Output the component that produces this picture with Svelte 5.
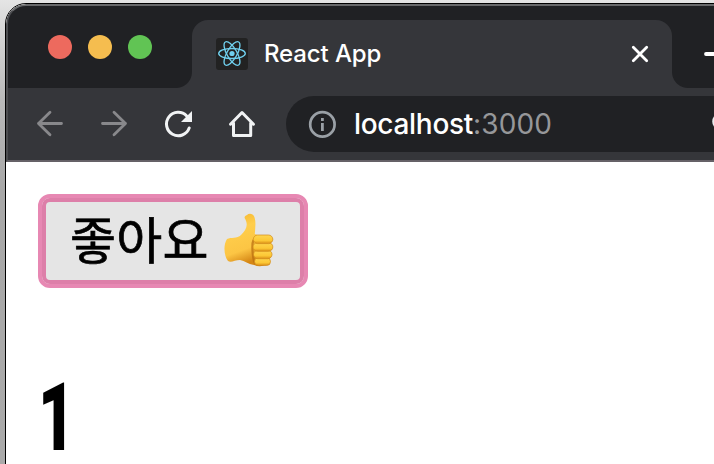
<script>
  let count = $state(1);
</script>

<div class="desktop">
  <div class="window">
    <div class="tabs">
      <div class="lights"><i class="red"></i><i class="yellow"></i><i class="green"></i></div>
      <div class="tab">
        <svg class="favicon" width="32" height="32" viewBox="0 0 32 32">
          <rect width="32" height="32" rx="3" fill="#222222" />
          <g fill="none" stroke="#70d0ee" stroke-width="1.35">
            <ellipse cx="16" cy="15.5" rx="13.3" ry="5" />
            <ellipse cx="16" cy="15.5" rx="13.3" ry="5" transform="rotate(60 16 15.5)" />
            <ellipse cx="16" cy="15.5" rx="13.3" ry="5" transform="rotate(120 16 15.5)" />
          </g>
          <circle cx="16" cy="15.5" r="2.6" fill="#70d0ee" />
        </svg>
        <span class="title">React App</span>
        <svg class="close" width="18" height="18" viewBox="0 0 18 18">
          <path d="M2.3 2.3 15.7 15.7M15.7 2.3 2.3 15.7" stroke="#fff" stroke-width="2.8" stroke-linecap="round" />
        </svg>
      </div>
      <svg class="plus" width="28" height="28" viewBox="0 0 28 28">
        <path d="M3 14H25M14 3V25" stroke="#fff" stroke-width="3.8" stroke-linecap="round" />
      </svg>
    </div>
    <div class="toolbar">
      <svg class="icon" width="32" height="32" viewBox="0 0 32 32" fill="none" stroke="#88888b" stroke-width="2.8" stroke-linecap="round" stroke-linejoin="round">
        <path d="M27.5 15.5H4.5M16 4.2 4.5 15.5 16 26.8" />
      </svg>
      <svg class="icon" width="32" height="32" viewBox="0 0 32 32" fill="none" stroke="#88888b" stroke-width="2.8" stroke-linecap="round" stroke-linejoin="round">
        <path d="M4.5 15.5H27.5M16 4.2 27.5 15.5 16 26.8" />
      </svg>
      <svg class="icon" width="32" height="32" viewBox="0 0 32 32">
        <path d="M27.2 20A11.7 11.7 0 1 1 24.7 8" fill="none" stroke="#f1f3f4" stroke-width="3" stroke-linecap="round" />
        <path d="M30 3V14H19Z" fill="#f1f3f4" />
      </svg>
      <svg class="icon" width="32" height="32" viewBox="0 0 32 32" fill="none" stroke="#f1f3f4" stroke-width="3" stroke-linejoin="round" stroke-linecap="round">
        <path d="M4.5 16.2 16 4.5 27.5 16.2M7.5 15V27.5H24.7V15" />
      </svg>
      <div class="address">
        <svg class="info" width="28" height="28" viewBox="0 0 28 28">
          <circle cx="14.4" cy="14.4" r="12.2" fill="none" stroke="#9aa0a6" stroke-width="2.7" />
          <path d="M13 8h2.8v3H13zM13 13h2.8v8H13z" fill="#9aa0a6" />
        </svg>
        <span class="url">localhost<span class="port">:3000</span></span>
        <svg class="search" width="24" height="24" viewBox="0 0 24 24"><circle cx="9" cy="9.5" r="7.5" fill="none" stroke="#e8eaed" stroke-width="2.6" /></svg>
      </div>
    </div>
    <main>
      <button onclick={() => count++}>
        <span class="label">좋아요</span>
        <svg class="thumb" width="54" height="56" viewBox="0 0 54 56" role="img" aria-label="👍">
          <defs>
            <linearGradient id="skin" x1="0" y1="0" x2="0.3" y2="1">
              <stop offset="0" stop-color="#f3b22a" /><stop offset=".35" stop-color="#ffce4c" /><stop offset=".75" stop-color="#fcc544" /><stop offset="1" stop-color="#d58614" />
            </linearGradient>
            <linearGradient id="finger" x1="0" y1="0" x2="0" y2="1">
              <stop offset="0" stop-color="#ffd650" /><stop offset=".65" stop-color="#fcc735" /><stop offset="1" stop-color="#da8e16" />
            </linearGradient>
          </defs>
          <path d="M24 2C26 0 30 .5 31.4 4C33.2 9 32.2 15 31.8 21C35 23 40 22 44 24L45 49C41 54 36 54 31 52C25 51 22 48 17 47C12 47 8 50 5 48C1 43 0 32 4 26C8 24 14 26 18 22C23 17 26 12 21.6 5C21.4 3.5 22.6 2.4 24 2Z" fill="url(#skin)" />
          <path d="M30.5 27C28.5 31 29.5 47 32.5 51" fill="none" stroke="#b96f10" stroke-width="2.3" opacity=".75" />
          <g fill="url(#finger)" stroke="#d18a1a" stroke-width=".7">
            <rect x="31.5" y="44.5" width="16" height="8" rx="4" />
            <rect x="30.5" y="37.2" width="18.5" height="8.5" rx="4.2" />
            <rect x="30" y="29.6" width="19.8" height="8.7" rx="4.3" />
            <rect x="30.3" y="22" width="19.5" height="8.6" rx="4.3" />
          </g>
        </svg>
      </button>
      <h1>{count}</h1>
    </main>
  </div>
</div>

<style>
  :global(body) { margin: 0; overflow: hidden; }
  .desktop {
    box-sizing: border-box; width: 714px; height: 464px; overflow: hidden;
    padding: 3px 0 0 5px;
    background: linear-gradient(180deg, #e5e5e5 0, #dedede 12px, #b9b9b9 100px, #a8a8a8 190px, #aaa 464px);
  }
  .window {
    box-sizing: border-box; width: 740px; height: 490px;
    border: 1px solid #000; border-radius: 21px 0 0 0; overflow: hidden;
    background: #fff; font-family: Inter, "Liberation Sans", sans-serif;
  }
  .tabs {
    box-sizing: border-box; height: 84px; display: flex; align-items: flex-start;
    background: #202124; border-top: 2px solid #68696b; border-left: 2px solid #4c4d50;
    border-top-left-radius: 20px;
  }
  .lights { display: flex; gap: 16px; padding: 29px 40px 0; }
  .lights i { width: 24px; height: 24px; border-radius: 50%; }
  .red { background: #ed6a5e; }
  .yellow { background: #f5bd4f; }
  .green { background: #61c454; }
  .tab {
    box-sizing: border-box; width: 480px; height: 68px; margin-top: 14px;
    display: flex; align-items: center; padding: 0 23px 0 24px;
    background: #35363a; border-radius: 16px 16px 0 0; position: relative;
  }
  .tab::before, .tab::after {
    content: ""; position: absolute; bottom: 0; width: 16px; height: 16px;
  }
  .tab::before { left: -16px; background: radial-gradient(circle at 0 0, transparent 15.5px, #35363a 16.5px); }
  .tab::after { right: -16px; background: radial-gradient(circle at 100% 0, transparent 15.5px, #35363a 16.5px); }
  .title { margin-left: 16px; color: #fff; font-size: 24px; font-weight: 500; line-height: 32px; letter-spacing: -.12px; white-space: nowrap; }
  .close { margin-left: auto; }
  .plus { margin: 34px 0 0 31px; flex: none; }
  .toolbar {
    box-sizing: border-box; height: 74px; display: flex; align-items: center;
    padding-left: 26px; background: #35363a;
    border-left: 2px solid #4c4d50; border-bottom: 2px solid #656167;
  }
  .icon { flex: none; margin-right: 32px; }
  .address {
    box-sizing: border-box; flex: none; width: 470px; height: 56px; margin-left: -4px;
    display: flex; align-items: center; padding-left: 22px;
    background: #202124; border-radius: 28px 0 0 28px;
  }
  .url { width: 358px; margin-left: 18px; color: #fff; font-size: 28px; font-weight: 500; line-height: 36px; letter-spacing: -.3px; white-space: nowrap; }
  .port { color: #96979a; font-weight: 400; letter-spacing: .15px; }
  .search { flex: none; }
  main { padding: 32px; }
  button {
    box-sizing: border-box; width: 270px; height: 94px; display: flex; align-items: center;
    border: 4px solid #e788b3; border-radius: 12px; padding: 0 0 0 28px;
    background: #e5e5e5; box-shadow: inset 0 0 0 4px #dd7fa9; color: #000;
  }
  .label {
    width: 153px; padding-bottom: 8px; font: 400 50px/70px "Noto Sans CJK KR", sans-serif;
    letter-spacing: .2px; text-align: left; white-space: nowrap; -webkit-text-stroke: .7px #000;
  }
  .thumb { flex: none; }
  h1 {
    width: 54px; margin: 84px 0 0 0; font: 900 94px/92px Roboto, sans-serif; color: #000;
    transform: scaleX(.68); transform-origin: 0 50%;
  }
</style>
